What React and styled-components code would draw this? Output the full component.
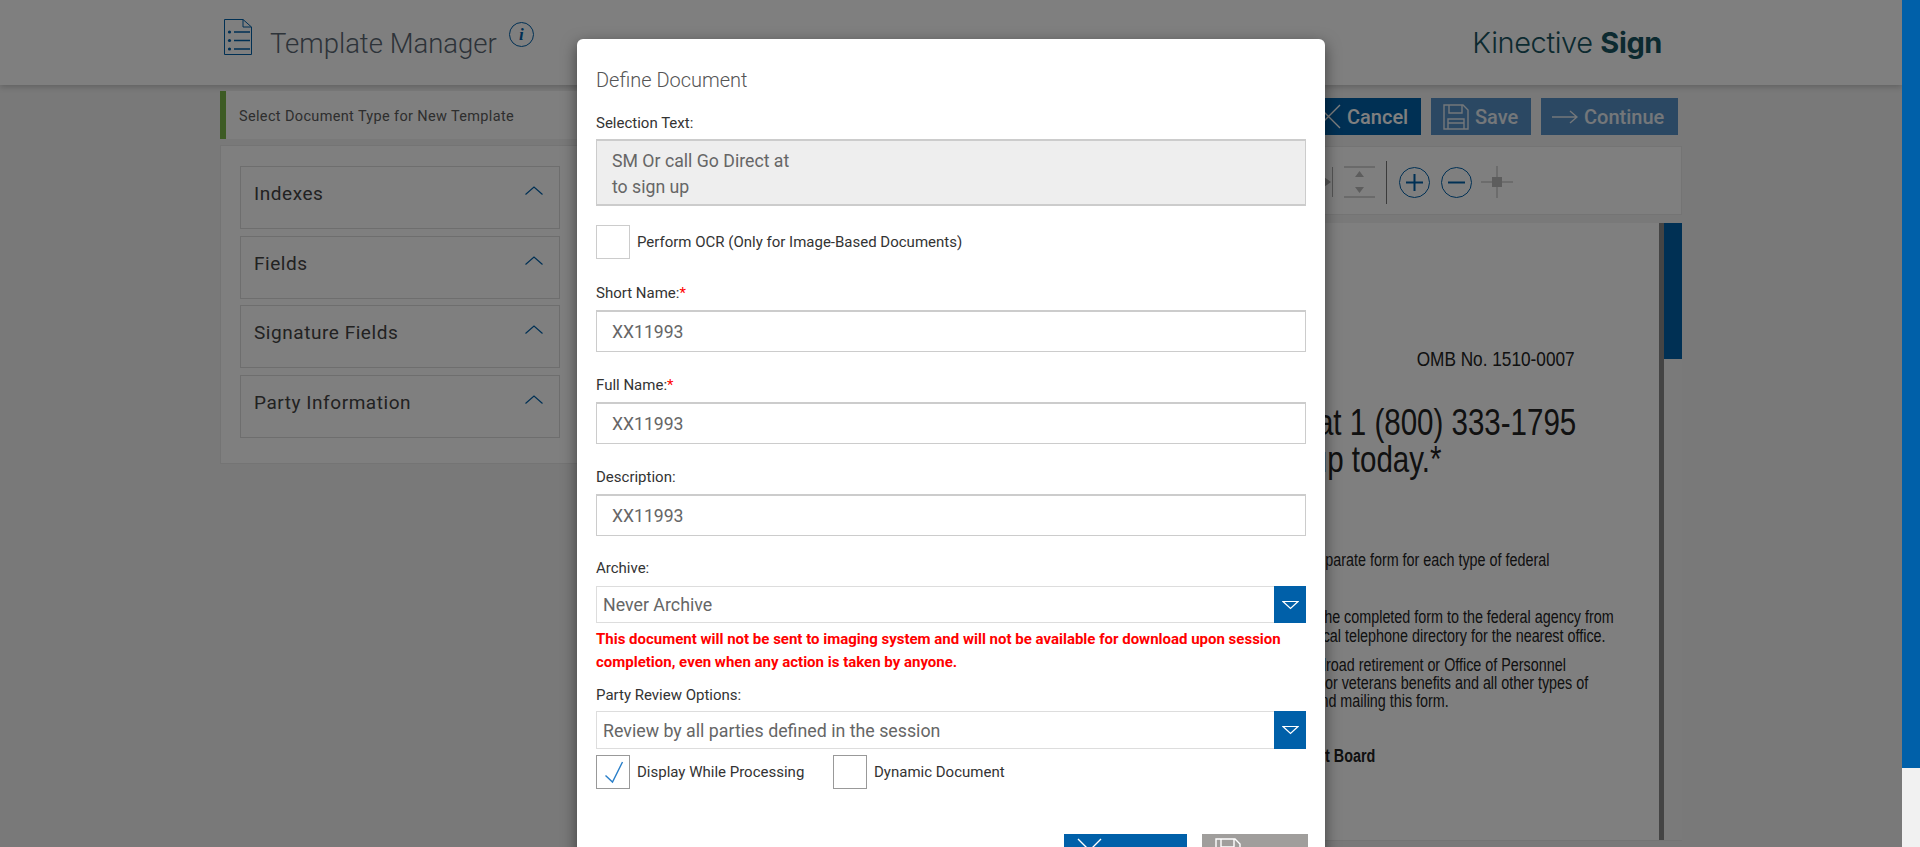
import React from 'react';
import styled, { createGlobalStyle } from 'styled-components';

const BLUE = '#0060a9';

const GlobalStyle = createGlobalStyle`
  html, body { margin: 0; height: 100%; overflow: hidden; }
  body { font-family: Roboto, "Liberation Sans", sans-serif; background: #f2f2f2; }
  * { box-sizing: border-box; }
`;

const Screen = styled.div`
  display: flex;
  height: 100vh;
  overflow: hidden;
`;

const Main = styled.div`
  position: relative;
  flex: 1;
  min-width: 0;
  background: #f2f2f2;
  overflow: hidden;
`;

const PageScrollbar = styled.div`
  width: 18px;
  background: #f1f1f1;
`;

const PageThumb = styled.div`
  height: 768px;
  background: ${BLUE};
`;

const Header = styled.header`
  display: flex;
  align-items: center;
  height: 85px;
  padding: 0 240px 0 224px;
  background: #fff;
  box-shadow: 0 2px 6px rgba(0, 0, 0, 0.2);
`;

const HeaderIcon = styled.svg`
  display: block;
  flex: none;
  margin-top: -11px;
`;

const PageTitle = styled.h1`
  margin: 2px 0 0 18px;
  font-size: 27.5px;
  font-weight: 300;
  color: #5a6672;
`;

const InfoBadge = styled.span`
  display: flex;
  align-items: center;
  justify-content: center;
  width: 25px;
  height: 25px;
  margin: -16px 0 0 12px;
  border: 1px solid ${BLUE};
  border-radius: 50%;
  font: italic bold 17px "Liberation Serif", serif;
  color: ${BLUE};
`;

const Brand = styled.div`
  margin-left: auto;
  font-family: Inter, sans-serif;
  font-size: 29px;
  font-weight: 300;
  letter-spacing: -0.4px;
  color: #185460;
  b { font-weight: 700; }
`;

const Content = styled.div`
  display: flex;
  padding: 6px 220px 0;
`;

const LeftColumn = styled.div`
  width: 400px;
  flex: none;
`;

const StatusBar = styled.div`
  display: flex;
  align-items: center;
  height: 48px;
  padding: 2px 0 0 13px;
  border-left: 6px solid #7ab648;
  background: #fff;
  font-size: 14.5px;
  letter-spacing: 0.35px;
  color: #5c5c5c;
`;

const SidePanel = styled.div`
  margin-top: 6px;
  padding: 20px 19px 25px;
  background: #fff;
  border: 1px solid #e8e8e8;
  display: flex;
  flex-direction: column;
  gap: 6.7px;
`;

const Accordion = styled.div`
  display: flex;
  justify-content: space-between;
  width: 320px;
  height: 63px;
  padding: 15px 16px 0 13px;
  border: 1px solid #dcdcdc;
  font-size: 19px;
  letter-spacing: 0.55px;
  line-height: 24px;
  color: #444;
`;

const ChevronIcon = styled.svg`
  display: block;
  margin-top: 4px;
`;

const RightColumn = styled.div`
  flex: 1;
  min-width: 0;
`;

const ActionRow = styled.div`
  display: flex;
  justify-content: flex-end;
  gap: 10px;
  padding: 7px 4px 0 0;
`;

const Action = styled.button`
  display: inline-flex;
  align-items: center;
  gap: 6px;
  height: 37px;
  width: ${p => p.$width}px;
  flex: none;
  padding: 0 0 0 ${p => p.$pad}px;
  border: 0;
  background: ${p => (p.$muted ? '#5690c6' : BLUE)};
  color: ${p => (p.$muted ? '#e8eef4' : '#fff')};
  font-family: Roboto, sans-serif;
  font-size: 20px;
  font-weight: 500;
`;

const ToolBar = styled.div`
  display: flex;
  align-items: center;
  justify-content: flex-end;
  height: 69px;
  margin-top: 11px;
  padding: 3px 168px 0 0;
  background: #fff;
  border: 1px solid #e8e8e8;
`;

const ToolDivider = styled.div`
  width: 1px;
  height: 43px;
  margin: 0 12px 0 11px;
  background: #777;
`;

const Tool = styled.svg`
  display: block;
  flex: none;
  margin-left: ${p => p.$gap || 0}px;
`;

const DocPanel = styled.div`
  display: flex;
  height: 618px;
  margin-top: 8px;
  background: #fff;
  border-bottom: 1px solid #e8e8e8;
`;

const DocPage = styled.div`
  flex: 1;
  min-width: 0;
  display: flex;
  flex-direction: column;
  align-items: flex-end;
  overflow: hidden;
  font-family: "Liberation Sans", Arial, sans-serif;
  color: #222;
`;

// the page in the viewer is a squeezed scan, so its lines are narrowed
const DocLine = styled.div`
  margin-top: ${p => p.$top}px;
  margin-right: ${p => p.$right}px;
  font-size: ${p => p.$size}px;
  line-height: ${p => p.$line}px;
  font-weight: ${p => (p.$bold ? 700 : 400)};
  white-space: nowrap;
  transform: scaleX(0.82);
  transform-origin: right center;
`;

const DocRail = styled.div`
  width: 5px;
  background: #888;
`;

const DocTrack = styled.div`
  width: 18px;
  background: #f4f4f4;
`;

const DocThumb = styled.div`
  height: 136px;
  background: ${BLUE};
`;

const Overlay = styled.div`
  position: absolute;
  inset: 0;
  display: flex;
  justify-content: center;
  align-items: flex-start;
  padding-top: 39px;
  background: rgba(0, 0, 0, 0.5);
  overflow: hidden;
`;

const Modal = styled.div`
  width: 748px;
  flex: none;
  padding: 29px 19px 14px;
  background: #fff;
  border-radius: 6px;
  box-shadow: 0 5px 15px rgba(0, 0, 0, 0.5);
`;

const ModalTitle = styled.h2`
  margin: 0 0 21px;
  font-size: 20px;
  line-height: 24px;
  font-weight: 300;
  color: #555;
`;

const Label = styled.label`
  display: block;
  height: 20px;
  margin-top: ${p => p.$top || 0}px;
  margin-bottom: ${p => p.$bottom || 7}px;
  font-size: 15px;
  line-height: 20px;
  color: #333;
  em { font-style: normal; color: #f00; }
`;

const ReadOnlyBox = styled.div`
  height: 67px;
  padding: 7px 15px;
  background: #eee;
  border: 1px solid #ccc;
  border-width: 2px 1px;
  font-size: 17.7px;
  line-height: 26px;
  color: #666;
`;

const TextInput = styled.div`
  height: 42px;
  padding: 0 15px;
  border: 1px solid #ccc;
  border-top-width: 2px;
  font-size: 17.6px;
  line-height: 40px;
  color: #666;
`;

const CheckRow = styled.div`
  display: flex;
  align-items: center;
  margin-top: ${p => p.$top || 0}px;
`;

const CheckItem = styled.div`
  display: flex;
  align-items: center;
  width: ${p => (p.$width ? `${p.$width}px` : 'auto')};
  font-size: 15px;
  color: #333;
`;

const CheckBox = styled.span`
  display: block;
  flex: none;
  width: 34px;
  height: 34px;
  margin-right: 7px;
  border: 1px solid ${p => (p.$light ? '#ccc' : '#999')};
`;

const SelectBox = styled.div`
  display: flex;
  height: ${p => p.$height}px;
  border: 1px solid #ddd;
  border-right: 0;
  font-size: 17.8px;
  color: #666;
`;

const SelectValue = styled.div`
  flex: 1;
  display: flex;
  align-items: center;
  padding-left: 6px;
`;

const SelectButton = styled.div`
  display: flex;
  align-items: center;
  justify-content: center;
  width: 32px;
  margin: -1px 0;
  background: ${BLUE};
`;

const Warning = styled.p`
  margin: 5px 0 0;
  font-size: 15px;
  line-height: 23px;
  font-weight: 700;
  color: #f00;
`;

const ModalFooter = styled.div`
  display: flex;
  justify-content: flex-end;
  gap: 15px;
  margin: 45px -2px 0 0;
`;

const FooterButton = styled.button`
  display: flex;
  align-items: flex-start;
  height: 37px;
  width: ${p => p.$width}px;
  padding: 4px 0 0 13px;
  border: 0;
  background: ${p => (p.$grey ? '#a09e9c' : BLUE)};
  color: #fff;
`;

const Chevron = () => (
  <ChevronIcon width="18" height="9" viewBox="0 0 18 9">
    <path d="M0.5 8.5 L9 1 L17.5 8.5" fill="none" stroke={BLUE} strokeWidth="1.2" />
  </ChevronIcon>
);

const CrossIcon = () => (
  <svg width="25" height="25" viewBox="0 0 25 25">
    <path d="M1 1 L24 24 M24 1 L1 24" stroke="currentColor" strokeWidth="1.4" fill="none" />
  </svg>
);

const SaveIcon = () => (
  <svg width="26" height="26" viewBox="0 0 26 26" fill="none" stroke="currentColor" strokeWidth="1.4">
    <path d="M1 1 H20 L25 6 V25 H1 Z" />
    <path d="M6 1 V9 H19 V1" />
    <path d="M5 25 V15 H21 V25 M5 19 H21" />
  </svg>
);

const ArrowIcon = () => (
  <svg width="26" height="14" viewBox="0 0 26 14" fill="none" stroke="currentColor" strokeWidth="1.4">
    <path d="M0 7 H25 M18 1 L25 7 L18 13" />
  </svg>
);

const SelectArrow = () => (
  <svg width="17" height="10" viewBox="0 0 17 10">
    <path d="M1 1.5 H16 L8.5 8.5 Z" fill="none" stroke="#fff" strokeWidth="1.2" />
  </svg>
);

const TemplateIcon = () => (
  <HeaderIcon width="28" height="36" viewBox="0 0 28 36" fill="none">
    <path d="M0.5 0.5 H19 L27.5 8 V35.5 H0.5 Z M19 0.5 V8 H27.5" stroke={BLUE} />
    <g fill={BLUE}>
      <circle cx="5.5" cy="13" r="1.6" />
      <circle cx="5.5" cy="21.5" r="1.6" />
      <circle cx="5.5" cy="30" r="1.6" />
    </g>
    <path d="M10 13 H26 M10 21.5 H26 M10 30 H26" stroke={BLUE} strokeWidth="1.6" />
  </HeaderIcon>
);

const docLines = [
  { text: 'OMB No. 1510-0007', top: 125, right: 84, size: 21, line: 22 },
  { text: 'Go Direct at 1 (800) 333-1795', top: 34, right: 83, size: 36, line: 37 },
  { text: 'to sign up today.*', top: 0, right: 217, size: 36, line: 37 },
  { text: 'Use a separate form for each type of federal', top: 73, right: 110, size: 17.5, line: 18 },
  { text: 'Send the completed form to the federal agency from', top: 39, right: 45, size: 17.5, line: 18 },
  { text: 'your local telephone directory for the nearest office.', top: 1, right: 53, size: 17.5, line: 18 },
  { text: 'For railroad retirement or Office of Personnel', top: 11, right: 93, size: 17.5, line: 18 },
  { text: 'benefits or veterans benefits and all other types of', top: 0, right: 71, size: 17.5, line: 18 },
  { text: 'completing and mailing this form.', top: 0, right: 210, size: 17.5, line: 18 },
  { text: 'Merit Board', top: 37, right: 284, size: 17.5, line: 18, bold: true },
];

const sections = ['Indexes', 'Fields', 'Signature Fields', 'Party Information'];

export default function App() {
  return (
    <>
      <GlobalStyle />
      <Screen>
        <Main>
          <Header>
            <TemplateIcon />
            <PageTitle>Template Manager</PageTitle>
            <InfoBadge>i</InfoBadge>
            <Brand>Kinective <b>Sign</b></Brand>
          </Header>
          <Content>
            <LeftColumn>
              <StatusBar>Select Document Type for New Template</StatusBar>
              <SidePanel>
                {sections.map(name => (
                  <Accordion key={name}>
                    {name}
                    <Chevron />
                  </Accordion>
                ))}
              </SidePanel>
            </LeftColumn>
            <RightColumn>
              <ActionRow>
                <Action $width={123} $pad={18}><CrossIcon />Cancel</Action>
                <Action $width={100} $pad={12} $muted><SaveIcon />Save</Action>
                <Action $width={137} $pad={11} $muted><ArrowIcon />Continue</Action>
              </ActionRow>
              <ToolBar>
                <Tool width="9" height="32" viewBox="0 0 9 32">
                  <path d="M0 11 L7 16 L0 21 Z" fill="#aaa" />
                  <path d="M8.5 1 V31" stroke="#aaa" />
                </Tool>
                <Tool $gap={11} width="31" height="32" viewBox="0 0 31 32">
                  <path d="M0 1 H31 M0 31 H31" stroke="#aaa" />
                  <path d="M15.5 5 L20 11 H11 Z M15.5 27 L20 21 H11 Z" fill="#bbb" />
                </Tool>
                <ToolDivider />
                <Tool width="31" height="31" viewBox="0 0 31 31" fill="none" stroke={BLUE}>
                  <circle cx="15.5" cy="15.5" r="15" />
                  <path d="M7 15.5 H24 M15.5 7 V24" strokeWidth="2" />
                </Tool>
                <Tool $gap={11} width="31" height="31" viewBox="0 0 31 31" fill="none" stroke={BLUE}>
                  <circle cx="15.5" cy="15.5" r="15" />
                  <path d="M7 15.5 H24" strokeWidth="2" />
                </Tool>
                <Tool $gap={9} width="32" height="32" viewBox="0 0 32 32">
                  <path d="M0 16 H32 M16 0 V32" stroke="#ccc" strokeWidth="1.5" />
                  <rect x="11" y="11" width="10" height="10" fill="#bbb" />
                </Tool>
              </ToolBar>
              <DocPanel>
                <DocPage>
                  {docLines.map(({ text, ...line }) => (
                    <DocLine
                      key={text}
                      $top={line.top}
                      $right={line.right}
                      $size={line.size}
                      $line={line.line}
                      $bold={line.bold}
                    >
                      {text}
                    </DocLine>
                  ))}
                </DocPage>
                <DocRail />
                <DocTrack><DocThumb /></DocTrack>
              </DocPanel>
            </RightColumn>
          </Content>
          <Overlay>
            <Modal>
              <ModalTitle>Define Document</ModalTitle>
              <Label $bottom={6}>Selection Text:</Label>
              <ReadOnlyBox>SM Or call Go Direct at<br />to sign up</ReadOnlyBox>
              <CheckRow $top={19}>
                <CheckItem><CheckBox $light />Perform OCR (Only for Image-Based Documents)</CheckItem>
              </CheckRow>
              <Label $top={24}>Short Name:<em>*</em></Label>
              <TextInput>XX11993</TextInput>
              <Label $top={23}>Full Name:<em>*</em></Label>
              <TextInput>XX11993</TextInput>
              <Label $top={23}>Description:</Label>
              <TextInput>XX11993</TextInput>
              <Label $top={22} $bottom={8}>Archive:</Label>
              <SelectBox $height={37}>
                <SelectValue>Never Archive</SelectValue>
                <SelectButton><SelectArrow /></SelectButton>
              </SelectBox>
              <Warning>
                This document will not be sent to imaging system and will not be available for download upon session
                completion, even when any action is taken by anyone.
              </Warning>
              <Label $top={11} $bottom={6}>Party Review Options:</Label>
              <SelectBox $height={38}>
                <SelectValue>Review by all parties defined in the session</SelectValue>
                <SelectButton><SelectArrow /></SelectButton>
              </SelectBox>
              <CheckRow $top={6}>
                <CheckItem $width={237}>
                  <CheckBox>
                    <svg width="32" height="32" viewBox="0 0 32 32">
                      <path d="M8.5 19.5 L15.5 26 L25.5 6" fill="none" stroke="#2a7fc9" strokeWidth="1.4" />
                    </svg>
                  </CheckBox>
                  Display While Processing
                </CheckItem>
                <CheckItem><CheckBox />Dynamic Document</CheckItem>
              </CheckRow>
              <ModalFooter>
                <FooterButton $width={123} aria-label="Cancel"><CrossIcon /></FooterButton>
                <FooterButton $width={106} $grey aria-label="Save"><SaveIcon /></FooterButton>
              </ModalFooter>
            </Modal>
          </Overlay>
        </Main>
        <PageScrollbar><PageThumb /></PageScrollbar>
      </Screen>
    </>
  );
}
